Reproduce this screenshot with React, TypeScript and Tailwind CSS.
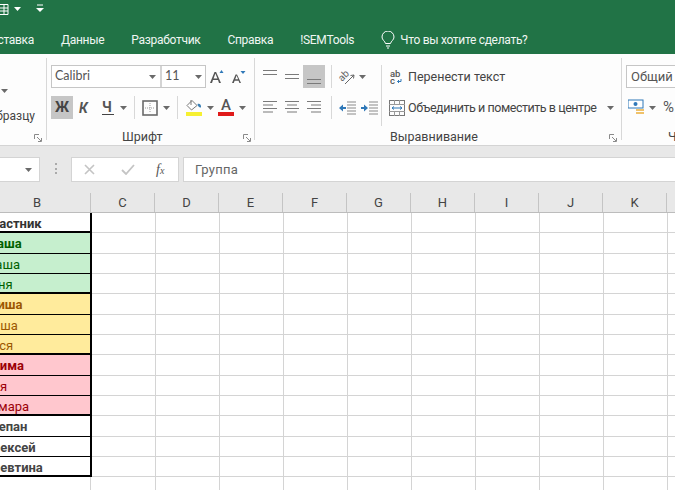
const ui = "font-['Roboto','Noto_Sans',sans-serif]";

const Caret = ({ className = "", fill = "#6a6a6a" }: { className?: string; fill?: string }) => (
  <svg width="7" height="4" viewBox="0 0 7 4" className={`shrink-0 ${className}`}>
    <path d="M0 0h7L3.5 4z" fill={fill} />
  </svg>
);

const Launcher = () => (
  <svg width="8" height="8" viewBox="0 0 8 8" fill="none" stroke="#8a8a8a" className="shrink-0">
    <path d="M.5 5V.5H5M3 3l4 4M7.5 4v3.5H4" />
  </svg>
);

const Sep = ({ h = "h-[23px]" }: { h?: string }) => <div className={`w-px bg-[#d8d8d8] shrink-0 ${h}`} />;

const Lines = ({ widths, align = "left", y = 0 }: { widths: number[]; align?: string; y?: number }) => (
  <svg width="16" height="14" viewBox="0 0 16 14" className="shrink-0">
    {widths.map((w, i) => {
      const x = align === "left" ? 1 : align === "right" ? 15 - w : 8 - w / 2;
      return <rect key={i} x={x} y={y + i * (widths.length > 2 ? 3.5 : 4)} width={w} height="1" fill="#7a7a7a" />;
    })}
  </svg>
);

const Indent = ({ right }: { right?: boolean }) => (
  <svg width="17" height="14" viewBox="0 0 17 14" className="shrink-0">
    {[1, 4, 7, 10, 13].map((y) => (
      <rect key={y} x="8" y={y - 0.5} width="9" height="1" fill="#8a8a8a" />
    ))}
    <path d={right ? "M0 6h3V3.5L7 7l-4 3.5V8H0z" : "M7 6H4V3.5L0 7l4 3.5V8h3z"} fill="#2f78b8" />
  </svg>
);

const groupLabel = "text-[12.5px] text-[#444] leading-none";

function ClippedGroup() {
  return (
    <div className="w-[46px] shrink-0 flex flex-col overflow-hidden">
      <div className="pl-[1px] pt-[35px]">
        <Caret />
      </div>
      <div className="mt-[16px] text-[12px] leading-[14px] text-[#444] whitespace-nowrap flex justify-end pr-[11px]">
        образцу
      </div>
      <div className="flex-1" />
      <div className="flex justify-end pr-[4px] pb-[3px]">
        <Launcher />
      </div>
    </div>
  );
}

function FontGroup() {
  return (
    <div className="w-[207px] shrink-0 pl-[4px] pr-[3px] flex flex-col">
      <div className="flex items-center h-[23px] mt-[11px]">
        <div className="flex h-[23px] w-[155px] border border-[#c6c6c6] bg-white text-[#555]">
          <div className="w-[110px] border-r-2 border-[#d4d4d4] flex items-center justify-between pl-[3px] pr-[4px]">
            <span className="font-['Lato',sans-serif] text-[12.5px]">Calibri</span>
            <Caret />
          </div>
          <div className="flex-1 flex items-center justify-between pl-[3px] pr-[3px]">
            <span className="font-['Lato',sans-serif] text-[12.5px]">11</span>
            <Caret />
          </div>
        </div>
        <svg width="14" height="14" viewBox="0 0 14 14" className="ml-[4px]">
          <path d="M0 13 4.5 2h1.600L11 13H9L8 10H3l-1 3zM3.600 8.500h3.800L5.400 3.600z" fill="#555" />
          <path d="M9.500 3 11.500 0l2 3z" fill="#2f78b8" />
        </svg>
        <svg width="14" height="14" viewBox="0 0 14 14" className="ml-[8px]">
          <path d="M0 13 3.600 4.500H5L9 13H7.400l-.8-2.300H2.600L1.800 13zM3.200 9.300h2.900L4.600 5.500z" fill="#555" />
          <path d="M8.500 1h5l-2.500 3z" fill="#2f78b8" />
        </svg>
      </div>
      <div className="flex items-center h-[23px] mt-[8px]">
        <div className="w-[22px] h-[23px] bg-[#c6c6c6] flex items-center justify-center text-[14px] font-bold text-[#444]">Ж</div>
        <span className="w-[11px] ml-[6px] text-[14px] font-bold italic text-[#555] leading-none">К</span>
        <span className="w-[12px] ml-[12px] text-[14px] font-bold text-[#555] leading-none border-b border-[#444]">Ч</span>
        <Caret className="ml-[6px]" />
        <div className="ml-[7px]"><Sep /></div>
        <svg width="16" height="16" viewBox="0 0 16 16" fill="none" className="ml-[7px] shrink-0">
          <rect x="1" y="1" width="14" height="14" stroke="#6a6a6a" strokeWidth="1.6" />
          <path d="M8 3v10M3 8h10" stroke="#9a9a9a" strokeDasharray="1 1" />
        </svg>
        <Caret className="ml-[5px]" />
        <div className="ml-[7px]"><Sep /></div>
        <div className="ml-[7px] w-[17px] flex flex-col items-center shrink-0">
          <svg width="17" height="13" viewBox="0 0 17 13" fill="none">
            <path d="M7 1.500 2 6.500l4.500 4.500L12 6.500z" fill="#fff" stroke="#7a7a7a" />
            <path d="M6 1v5" stroke="#7a7a7a" />
            <path d="M12.500 5c2-1 4 1 3.500 3.500-1.500.5-3.500-1.500-3.500-3.500z" fill="#3a7fb5" />
          </svg>
          <div className="w-[16px] h-[4px] bg-[#f6f032]" />
        </div>
        <Caret className="ml-[5px]" />
        <div className="ml-[4px] w-[16px] flex flex-col items-center shrink-0">
          <span className="text-[15px] font-medium text-[#555] leading-[13px]">A</span>
          <div className="w-[16px] h-[4px] bg-[#e01a1a]" />
        </div>
        <Caret className="ml-[5px]" />
      </div>
      <div className="flex-1 flex items-end justify-between pl-[71px]">
        <span className={`${groupLabel} mb-[2px]`}>Шрифт</span>
        <div className="mb-[3px]">
          <Launcher />
        </div>
      </div>
    </div>
  );
}

function AlignGroup() {
  return (
    <div className="w-[366px] shrink-0 flex flex-col">
      <div className="flex h-[72px]">
        <div className="w-[127px] shrink-0 pl-[4px] border-r border-[#d8d8d8] h-[61px] mt-[11px] flex flex-col">
          <div className="flex items-center h-[23px]">
            <div className="w-[22px] flex justify-center"><Lines widths={[14, 14]} align="center" y={0} /></div>
            <div className="w-[22px] flex justify-center"><Lines widths={[14, 14]} align="center" y={4} /></div>
            <div className="w-[22px] h-[23px] bg-[#c6c6c6] flex justify-center items-center"><Lines widths={[14, 14]} align="center" y={9} /></div>
            <div className="ml-[6px]"><Sep /></div>
            <svg width="18" height="18" viewBox="0 0 18 18" className="ml-[6px] shrink-0" fill="none">
              <text x="1" y="11" fontSize="10" fontFamily="Roboto" fill="#666" transform="rotate(-45 6 9)">ab</text>
              <path d="M7 16 16 7M16 7l-3.500.5M16 7l-.5 3.500" stroke="#666" />
            </svg>
            <Caret className="ml-[3px]" />
          </div>
          <div className="flex items-center h-[23px] mt-[8px]">
            <div className="w-[22px] flex justify-center"><Lines widths={[14, 10, 14, 10]} /></div>
            <div className="w-[22px] flex justify-center"><Lines widths={[14, 10, 14, 10]} align="center" /></div>
            <div className="w-[22px] flex justify-center"><Lines widths={[14, 10, 14, 10]} align="right" /></div>
            <div className="ml-[6px]"><Sep /></div>
            <div className="ml-[7px]"><Indent /></div>
            <div className="ml-[5px]"><Indent right /></div>
          </div>
        </div>
        <div className="flex-1 pl-[7px] mt-[11px] flex flex-col text-[12.5px] text-[#444]">
          <div className="flex items-center h-[23px] gap-[3px]">
            <svg width="16" height="16" viewBox="0 0 16 16" className="shrink-0">
              <text x="1" y="7.500" fontSize="9.500" fontFamily="Roboto" fontWeight="500" fill="#555">ab</text>
              <text x="1" y="15" fontSize="9.500" fontFamily="Roboto" fontWeight="500" fill="#555">c</text>
              <path d="M12 10v2.500H8.500M10 11l-1.500 1.500L10 14" stroke="#2f78b8" fill="none" />
            </svg>
            <span className="pt-[1px]">Перенести текст</span>
          </div>
          <div className="flex items-center h-[23px] mt-[8px] gap-[3px]">
            <svg width="16" height="16" viewBox="0 0 16 16" fill="none" className="shrink-0">
              <rect x=".5" y=".5" width="15" height="15" stroke="#777" />
              <path d="M0 4.500h16M0 11.500h16M5.500 0v4.500M10.500 0v4.500M5.500 11.500V16M10.500 11.500V16" stroke="#999" />
              <path d="M3 8h10M3 8l2-1.500M3 8l2 1.500M13 8l-2-1.500M13 8l-2 1.500" stroke="#2f78b8" />
            </svg>
            <span className="whitespace-nowrap pt-[1px] tracking-[-0.45px]">Объединить и поместить в центре</span>
            <Caret className="ml-[8px]" />
          </div>
        </div>
      </div>
      <div className="flex-1 flex items-end pl-[135px] pr-[4px] justify-between">
        <span className={`${groupLabel} mb-[2px]`}>Выравнивание</span>
        <div className="mb-[3px]">
          <Launcher />
        </div>
      </div>
    </div>
  );
}

function NumberGroup() {
  return (
    <div className="flex-1 min-w-0 overflow-hidden pl-[4px] flex flex-col">
      <div className="w-[80px] h-[23px] mt-[11px] border border-[#c6c6c6] bg-white pl-[4px] text-[13px] text-[#555] leading-[21px]">Общий</div>
      <div className="flex items-center h-[23px] mt-[8px] pl-[2px] w-[80px]">
        <svg width="17" height="17" viewBox="0 0 17 17" className="shrink-0">
          <rect x="0" y="1" width="15" height="8" fill="#fff" stroke="#2f78b8" />
          <circle cx="7.500" cy="5" r="2" fill="#2f78b8" />
          <path d="M8 10h8v2H8zM8 13h8v2H8z" fill="#f0c26a" />
        </svg>
        <Caret className="ml-[4px]" />
        <span className="ml-[7px] text-[15px] text-[#555]">%</span>
      </div>
      <div className="flex-1 flex items-end pl-[42px]">
        <span className={`${groupLabel} mb-[2px] whitespace-nowrap`}>Число</span>
      </div>
    </div>
  );
}

const cols = ["C", "D", "E", "F", "G", "H", "I", "J", "K", "L"];

const rows: { t: string; b?: boolean; bg?: string; c?: string; thick?: boolean }[] = [
  { t: "Участник", b: true, c: "text-[#333]", thick: true },
  { t: "Глаша", b: true, bg: "bg-[#c6efce]", c: "text-[#006100]" },
  { t: "Маша", bg: "bg-[#c6efce]", c: "text-[#006100]" },
  { t: "Таня", bg: "bg-[#c6efce]", c: "text-[#006100]", thick: true },
  { t: "Гриша", b: true, bg: "bg-[#ffeb9c]", c: "text-[#9c5700]" },
  { t: "Паша", bg: "bg-[#ffeb9c]", c: "text-[#9c5700]" },
  { t: "Вася", bg: "bg-[#ffeb9c]", c: "text-[#9c5700]", thick: true },
  { t: "Клима", b: true, bg: "bg-[#ffc7ce]", c: "text-[#9c0006]" },
  { t: "Аня", bg: "bg-[#ffc7ce]", c: "text-[#9c0006]" },
  { t: "Тамара", bg: "bg-[#ffc7ce]", c: "text-[#9c0006]", thick: true },
  { t: "Степан", b: true, c: "text-[#444]" },
  { t: "Алексей", b: true, c: "text-[#444]" },
  { t: "Алевтина", b: true, c: "text-[#444]", thick: true },
];

export default function App() {
  return (
    <div className={`w-[675px] h-[490px] overflow-hidden flex flex-col bg-white ${ui}`}>
      <div className="h-[54px] bg-[#217346] flex flex-col shrink-0 text-white">
        <div className="h-[28px] flex items-start pt-[3px]">
          <svg width="9" height="12" viewBox="0 0 9 12" fill="none" stroke="#fff" className="shrink-0">
            <path d="M0 1.500h8v10H0M0 5h8M0 8h8M4 1.500v10" />
          </svg>
          <Caret className="ml-[5px] mt-[4px]" fill="#fff" />
          <svg width="8" height="8" viewBox="0 0 8 8" className="ml-[15px] mt-[1px]">
            <path d="M1 .5h6v1H1zM0 4h8L4 8z" fill="#fff" />
          </svg>
        </div>
        <div className="flex items-center h-[22px] pt-[1px] text-[12px] tracking-[-0.3px] text-[#f0f6f2] whitespace-nowrap">
          <div className="w-[34px] overflow-hidden flex justify-end shrink-0">Вставка</div>
          <span className="ml-[27px]">Данные</span>
          <span className="ml-[27px]">Разработчик</span>
          <span className="ml-[27px]">Справка</span>
          <span className="ml-[27px]">!SEMTools</span>
          <svg width="14" height="18" viewBox="0 0 14 18" fill="none" stroke="#fff" className="ml-[27px] shrink-0">
            <path d="M4.500 12.500C4 10 1 9 1 6a6 6 0 0 1 12 0c0 3-3 4-3.500 6.500zM5 15h4M6 17h2" />
          </svg>
          <span className="ml-[5px]">Что вы хотите сделать?</span>
        </div>
      </div>

      <div className="h-[92px] bg-[#fdfdfd] border-b border-[#d4d4d4] flex shrink-0">
        <ClippedGroup />
        <div className="mt-[4px] h-[82px]"><Sep h="h-[82px]" /></div>
        <FontGroup />
        <div className="mt-[4px] h-[82px]"><Sep h="h-[82px]" /></div>
        <AlignGroup />
        <div className="mt-[4px] h-[82px]"><Sep h="h-[82px]" /></div>
        <NumberGroup />
      </div>

      <div className="h-[47px] bg-[#e8e8e8] shrink-0 flex items-start pt-[11px]">
        <div className="w-[40px] h-[25px] bg-white border border-l-0 border-[#d4d4d4] flex items-center justify-end pr-[7px]">
          <Caret />
        </div>
        <div className="w-[31px] flex justify-center pt-[6px]">
          <div className="w-[2px] h-[11px] border-l-2 border-dotted border-[#aaa]" />
        </div>
        <div className="w-[108px] h-[25px] bg-white border border-[#d4d4d4] flex items-center pl-[12px]">
          <svg width="11" height="11" viewBox="0 0 11 11" stroke="#c4c4c4" strokeWidth="1.6" fill="none">
            <path d="M1 1l9 9M10 1l-9 9" />
          </svg>
          <svg width="14" height="11" viewBox="0 0 14 11" stroke="#c4c4c4" strokeWidth="1.8" fill="none" className="ml-[26px]">
            <path d="M1 6l4 4 8-9" />
          </svg>
          <span className="ml-[21px] font-['Liberation_Serif',serif] italic text-[14px] text-[#555]">f<span className="text-[10px]">x</span></span>
        </div>
        <div className="flex-1 h-[25px] ml-[4px] bg-white border-y border-l border-[#d4d4d4] pl-[11px] text-[13px] tracking-[0.3px] text-[#666] leading-[23px]">Группа</div>
      </div>

      <div className="h-[20px] bg-[#e8e8e8] border-b border-[#bcbcbc] flex shrink-0 text-[13px] text-[#444]">
        <div className="w-[91px] shrink-0 border-r border-[#c4c4c4] pl-[33px] leading-[20px]">B</div>
        {cols.map((c) => (
          <div key={c} className="w-[64px] shrink-0 border-r border-[#c4c4c4] text-center leading-[20px]">{c}</div>
        ))}
      </div>

      <div className="flex flex-1 text-[13px] leading-[21px] whitespace-nowrap">
        <div className="w-[92px] shrink-0 flex flex-col overflow-hidden">
          {rows.map((r) => (
            <div
              key={r.t}
              className={`h-[20.33px] shrink-0 border-r-2 border-r-black ${r.thick ? "border-b-2" : "border-b"} border-b-black ${r.bg ?? "bg-white"} ${r.c} ${r.b ? "font-bold" : ""} -ml-[16px]`}
            >
              {r.t}
            </div>
          ))}
          <div className="flex-1 border-r border-[#d4d4d4] mr-[1px]" />
        </div>
        <div className="flex-1 bg-[repeating-linear-gradient(to_bottom,transparent_0,transparent_19.33px,#d4d4d4_19.33px,#d4d4d4_20.33px),repeating-linear-gradient(to_right,transparent_0,transparent_63px,#d4d4d4_63px,#d4d4d4_64px)]" />
      </div>
    </div>
  );
}
